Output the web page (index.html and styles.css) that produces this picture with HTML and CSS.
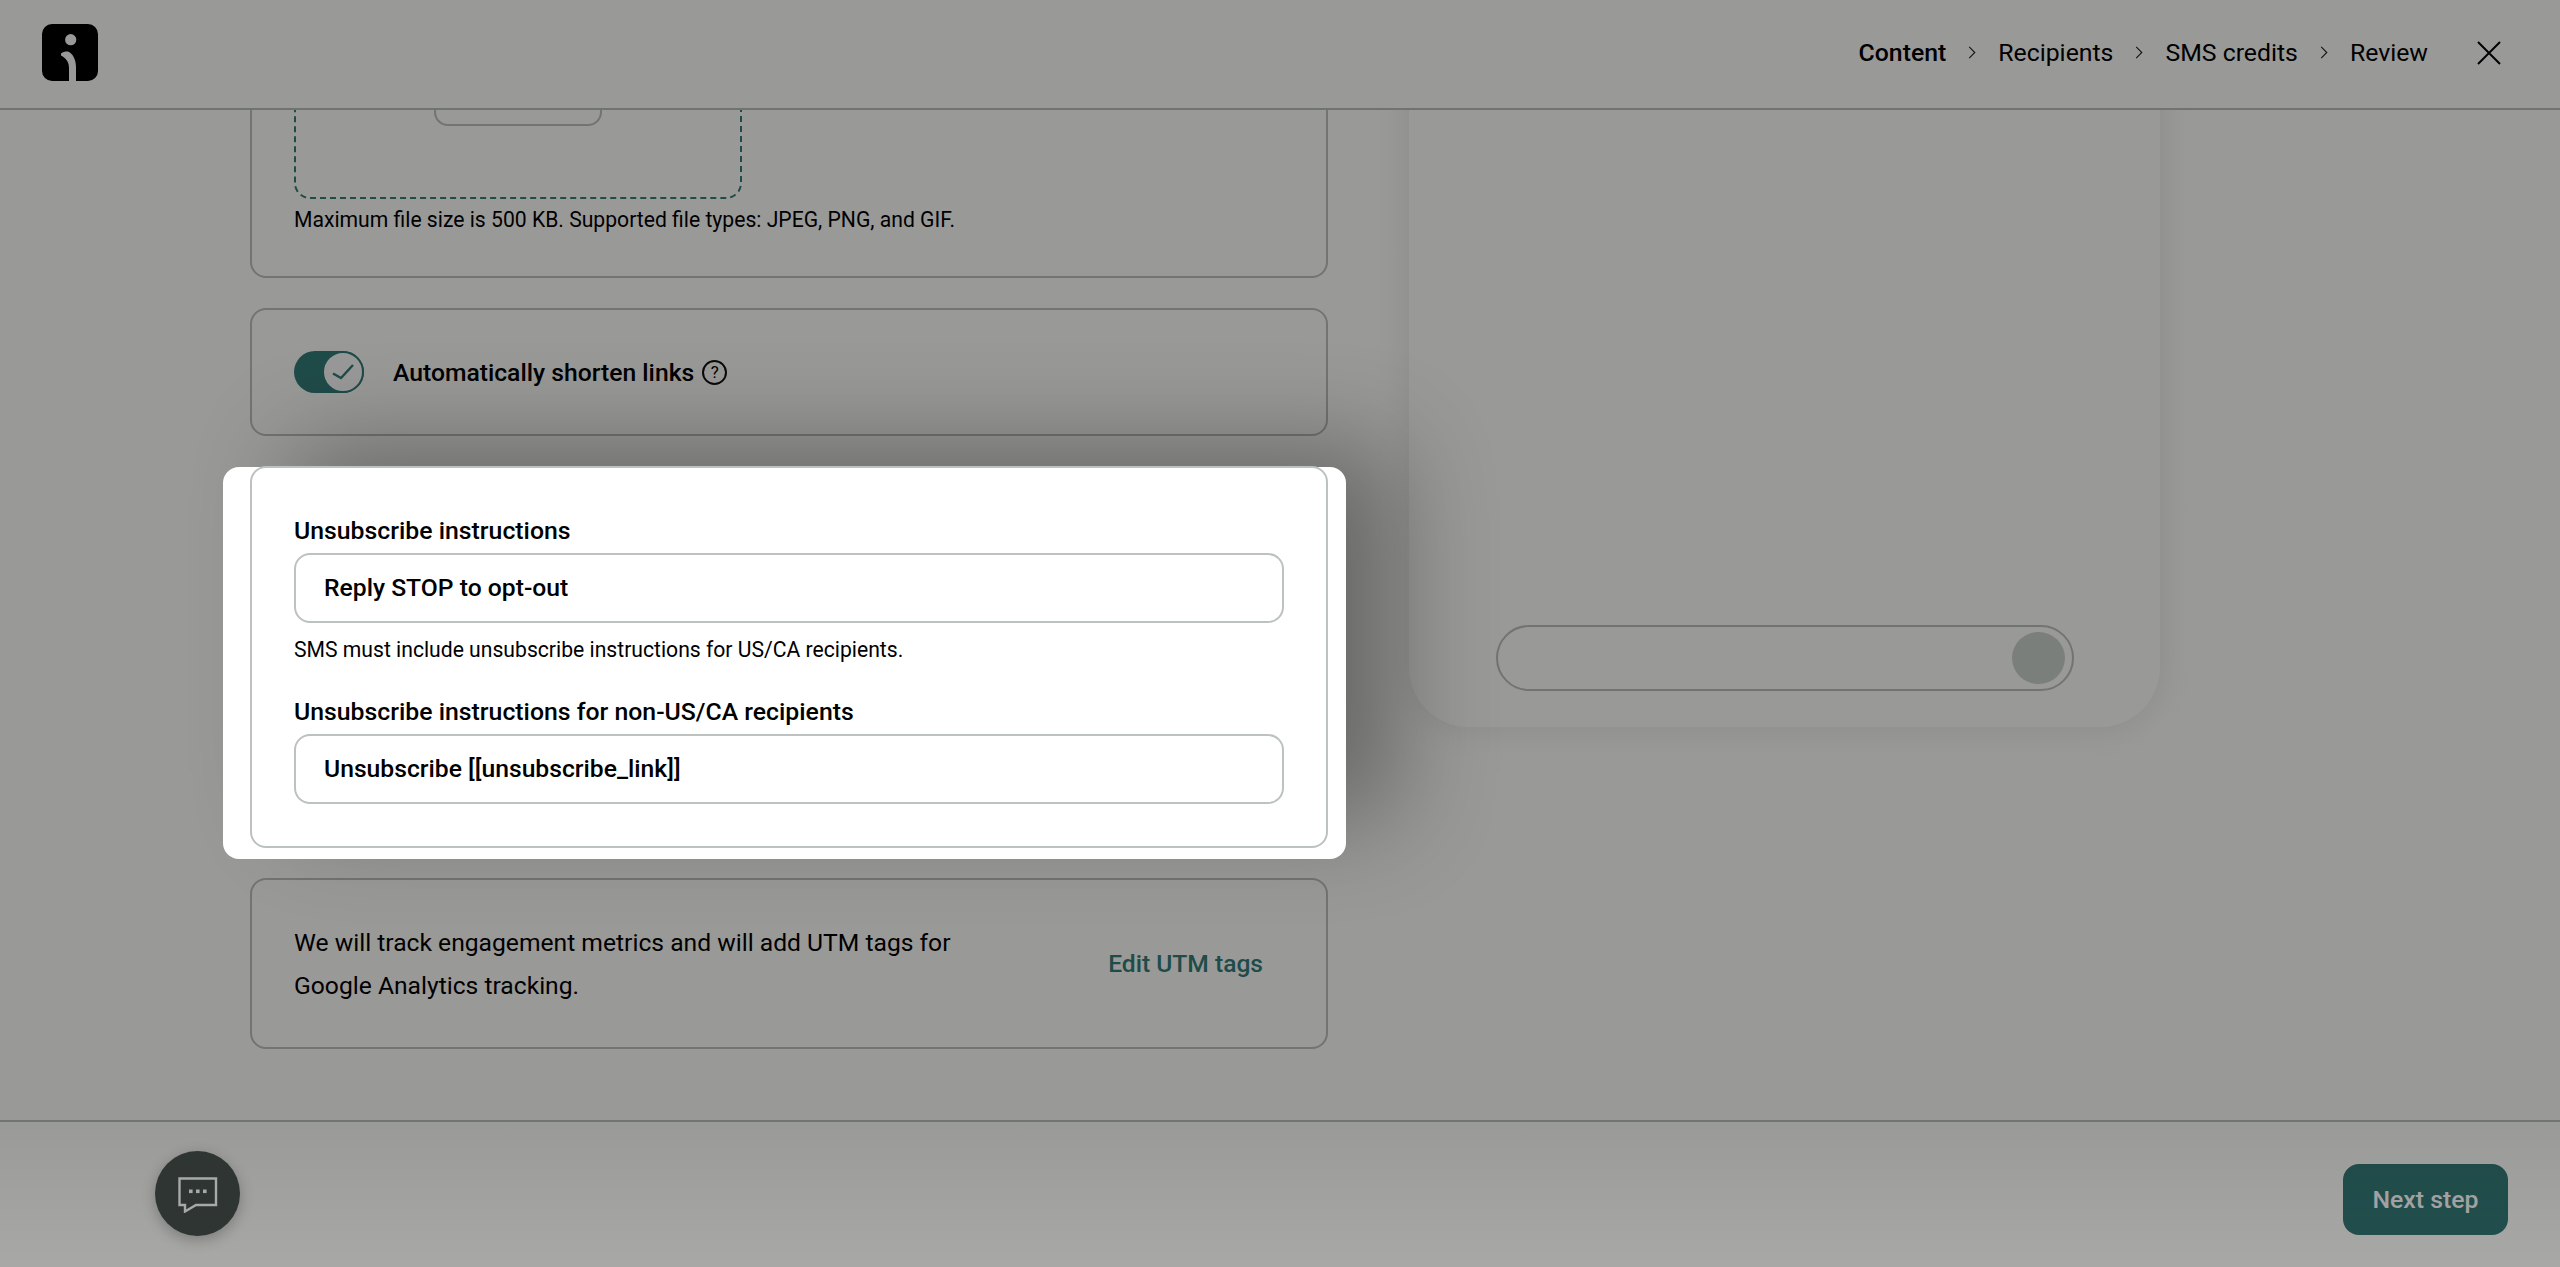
FILE: index.html
```html
<!DOCTYPE html>
<html lang="en">
<head>
<meta charset="utf-8">
<title>SMS campaign content</title>
<link rel="stylesheet" href="styles.css">
</head>
<body>
<div class="app">
  <header class="topbar">
    <svg class="logo" viewBox="0 0 56 57" aria-hidden="true">
      <rect width="56" height="57" rx="10" fill="#000"/>
      <circle cx="28.7" cy="15.7" r="5.6" fill="#fff"/>
      <path d="M19 29.5C22 27.5 25 27 27 28C31 30 34 36 34 43V57H27V44C27 38 24 34 19 31.5Z" fill="#fff"/>
    </svg>
    <nav class="steps">
      <span class="step step-active">Content</span>
      <svg class="chev" viewBox="0 0 8 14" aria-hidden="true"><path d="M1 1l6 6-6 6"/></svg>
      <span class="step">Recipients</span>
      <svg class="chev" viewBox="0 0 8 14" aria-hidden="true"><path d="M1 1l6 6-6 6"/></svg>
      <span class="step">SMS credits</span>
      <svg class="chev" viewBox="0 0 8 14" aria-hidden="true"><path d="M1 1l6 6-6 6"/></svg>
      <span class="step">Review</span>
    </nav>
    <svg class="close" viewBox="0 0 24 24" aria-hidden="true"><path d="M1 1l22 22M23 1L1 23"/></svg>
  </header>

  <main class="main">
    <section class="form">
      <div class="card card-upload">
        <div class="dropzone"><div class="upload-btn"></div></div>
        <p class="hint">Maximum file size is 500 KB. Supported file types: JPEG, PNG, and GIF.</p>
      </div>
      <div class="card card-toggle">
        <span class="toggle">
          <span class="knob">
            <svg viewBox="0 0 22 16" aria-hidden="true"><path d="M1 9.5l8 4.6L21 1"/></svg>
          </span>
        </span>
        <span class="toggle-label">Automatically shorten links</span>
        <span class="help">?</span>
      </div>
      <div class="spot-wrap">
        <div class="spot"></div>
        <div class="card card-unsub">
          <label class="field-label">Unsubscribe instructions</label>
          <div class="input">Reply STOP to opt-out</div>
          <p class="hint hint-field">SMS must include unsubscribe instructions for US/CA recipients.</p>
          <label class="field-label field-label-second">Unsubscribe instructions for non-US/CA recipients</label>
          <div class="input">Unsubscribe [[unsubscribe_link]]</div>
        </div>
      </div>
      <div class="card card-utm">
        <p class="utm-text">We will track engagement metrics and will add UTM tags for Google Analytics tracking.</p>
        <span class="utm-link">Edit UTM tags</span>
      </div>
    </section>
    <aside class="phone">
      <div class="composer"><span class="send"></span></div>
    </aside>
  </main>

  <footer class="footer">
    <button class="next">Next step</button>
  </footer>

  <div class="scrim"></div>
  <button class="chat" aria-label="Chat">
    <svg viewBox="0 0 40 36" aria-hidden="true">
      <path class="bubble" d="M1.5 1.5H38V28H18L7 34.5V28H1.5Z"/>
      <rect x="11" y="12.5" width="3.6" height="3.6"/><rect x="18" y="12.5" width="3.6" height="3.6"/><rect x="25" y="12.5" width="3.6" height="3.6"/>
    </svg>
  </button>
</div>
</body>
</html>
```
FILE: styles.css
```css
* { box-sizing: border-box; }
html, body { margin: 0; height: 100%; }
body {
  font-family: Roboto, "Liberation Sans", sans-serif;
  color: #000;
  background: #fff;
  overflow: hidden;
}
.app {
  position: relative;
  display: flex;
  flex-direction: column;
  height: 1267px;
  overflow: hidden;
  background: #fffffc;
}
.topbar {
  flex: none;
  height: 110px;
  display: flex;
  align-items: center;
  padding: 0 59px 3px 42px;
  border-bottom: 2px solid #b9bfbc;
  background: #fffffc;
  position: relative;
  z-index: 2;
}
.logo { width: 56px; height: 57px; }
.steps {
  margin-left: auto;
  display: flex;
  align-items: center;
  font-size: 24.8px;
}
.step-active { font-weight: 500; }
.chev {
  width: 8px;
  height: 13px;
  margin: 0 22px;
  fill: none;
  stroke: #222;
  stroke-width: 1.2;
}
.close {
  width: 24px;
  height: 24px;
  margin-left: 49px;
  fill: none;
  stroke: #000;
  stroke-width: 2;
}
.main {
  flex: 1;
  min-height: 0;
  overflow: hidden;
  display: flex;
  align-items: flex-end;
  padding: 0 0 71px 250px;
  gap: 81px;
}
.form {
  flex: none;
  width: 1078px;
  display: flex;
  flex-direction: column;
  gap: 30px;
}
.card {
  border: 2px solid #bcc2bf;
  border-radius: 16px;
  position: relative;
}
.card-upload {
  padding: 42px 42px 39px;
}
.dropzone {
  height: 200px;
  width: 448px;
  border: 2px dashed #347d79;
  border-radius: 16px;
  display: flex;
  justify-content: center;
  align-items: flex-end;
  padding-bottom: 71px;
}
.upload-btn {
  width: 168px;
  height: 64px;
  border: 2px solid #bcc2bf;
  border-radius: 14px;
}
.hint {
  margin: 4px 0 0;
  font-size: 21.15px;
  line-height: 34px;
}
.card-toggle {
  height: 128px;
  display: flex;
  align-items: center;
  padding: 0 42px;
}
.toggle {
  width: 70px;
  height: 42px;
  border-radius: 21px;
  background: #347d79;
  display: flex;
  justify-content: flex-end;
}
.knob {
  width: 42px;
  height: 42px;
  border-radius: 50%;
  background: #fff;
  border: 2px solid #347d79;
  display: flex;
  align-items: center;
  justify-content: center;
}
.knob svg {
  width: 22px;
  height: 16px;
  fill: none;
  stroke: #347d79;
  stroke-width: 2.4;
}
.toggle-label {
  margin-left: 29px;
  font-size: 24.7px;
  font-weight: 500;
}
.help {
  margin-left: 8px;
  width: 25px;
  height: 25px;
  border: 2px solid #111;
  border-radius: 50%;
  font-size: 17px;
  line-height: 21px;
  text-align: center;
}
.spot-wrap {
  position: relative;
  z-index: 4;
}
.spot {
  position: absolute;
  top: 1px;
  left: -27px;
  right: -18px;
  bottom: -11px;
  border-radius: 16px;
  background: #fff;
  box-shadow: 60px -30px 100px -10px rgba(0, 0, 0, 0.32);
}
.card-unsub {
  padding: 47px 42px 42px;
  height: 382px;
}
.field-label {
  display: block;
  font-size: 24.8px;
  font-weight: 500;
  line-height: 32px;
  margin-bottom: 6px;
}
.field-label-second { margin-top: 29px; }
.input {
  height: 70px;
  border: 2px solid #bcc2bf;
  border-radius: 16px;
  padding: 0 28px;
  font-size: 24.7px;
  font-weight: 500;
  line-height: 66px;
}
.hint-field { margin-top: 10px; }
.card-utm {
  height: 171px;
  display: flex;
  align-items: center;
  justify-content: space-between;
  padding: 0 63px 0 42px;
}
.utm-text {
  margin: 0;
  width: 680px;
  font-size: 24.65px;
  line-height: 43px;
}
.utm-link {
  font-size: 24.6px;
  font-weight: 500;
  color: #347d79;
}
.phone {
  flex: none;
  width: 751px;
  height: 800px;
  margin-bottom: 322px;
  border-radius: 0 0 60px 60px;
  box-shadow: 0 0 36px rgba(0, 0, 0, 0.1);
  display: flex;
  align-items: flex-end;
  justify-content: center;
  padding-bottom: 36px;
}
.composer {
  width: 578px;
  height: 66px;
  border: 2px solid #bcc2bf;
  border-radius: 33px;
  display: flex;
  align-items: center;
  justify-content: flex-end;
  padding-right: 7px;
}
.send {
  width: 53px;
  height: 52px;
  border-radius: 50%;
  background: #cdd4cd;
}
.footer {
  flex: none;
  height: 147px;
  border-top: 2px solid #bcc2bf;
  display: flex;
  justify-content: flex-end;
  align-items: flex-start;
  padding: 42px 52px 0 0;
}
.next {
  width: 165px;
  height: 71px;
  border: 0;
  border-radius: 16px;
  background: #337976;
  color: #fff;
  font-family: inherit;
  font-size: 24.8px;
  font-weight: 500;
}
.scrim {
  position: absolute;
  inset: 0;
  z-index: 3;
  pointer-events: none;
  background: linear-gradient(to bottom, rgba(0, 0, 0, 0.4) 0, rgba(0, 0, 0, 0.4) 88%, rgba(0, 0, 0, 0.34) 100%);
}
.chat {
  position: absolute;
  left: 155px;
  top: 1151px;
  z-index: 5;
  width: 85px;
  height: 85px;
  padding: 0;
  border: 0;
  border-radius: 50%;
  background: #2f3533;
  box-shadow: 0 4px 14px rgba(0, 0, 0, 0.25);
  display: flex;
  align-items: center;
  justify-content: center;
}
.chat svg { width: 40px; height: 36px; margin-top: 2px; fill: #a8aaa6; }
.chat .bubble { fill: none; stroke: #a8aaa6; stroke-width: 2.4; }
```
